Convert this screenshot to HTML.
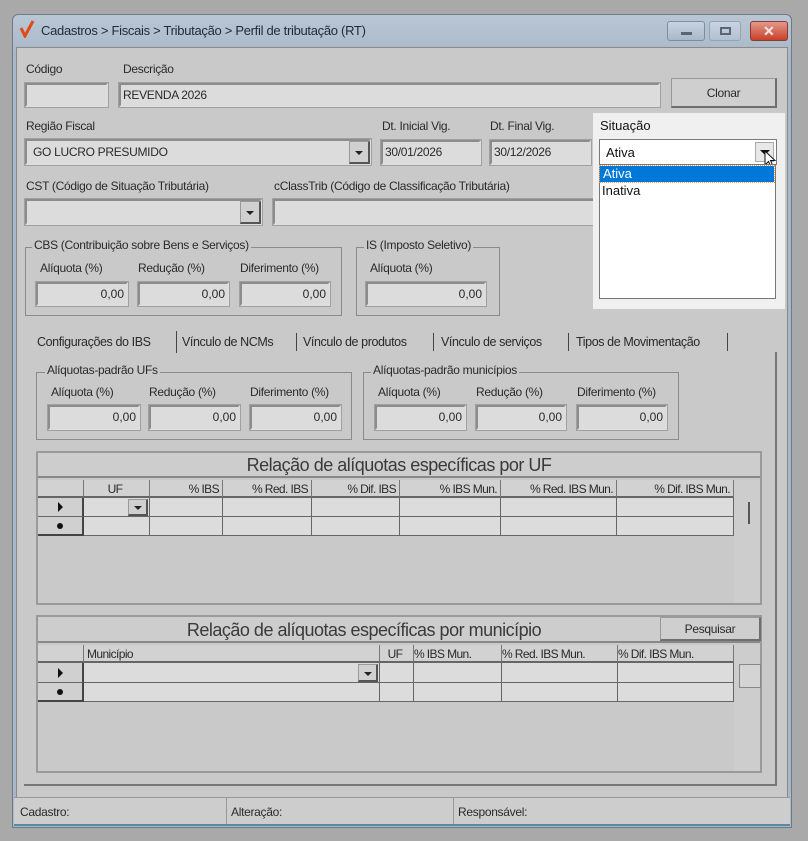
<!DOCTYPE html>
<html><head><meta charset="utf-8"><style>
*{box-sizing:border-box;margin:0;padding:0}
body{width:808px;height:841px;background:#a9a9a9;position:relative;overflow:hidden;font-family:"Liberation Sans",sans-serif;font-size:12px;color:#2a2a2a}
.a{position:absolute}
.win{left:12px;top:14px;width:780px;height:814px;background:linear-gradient(#b9c6d4,#a9b8c8 40px,#a9b8c8);border:1px solid #6f7a86;border-radius:6px 6px 0 0}
.cl{left:16px;top:47px;width:772px;height:778px;background:#c9c9c9;border:1px solid #8a8a8a}
.in{background:#dcdcdc;border:2px solid #8c8c8c;border-right-color:#ddd;border-bottom-color:#ddd;outline:1px solid #a0a0a0}
.tx{white-space:nowrap;letter-spacing:-0.3px}
.btn{background:#cfcfcf;border:1px solid #999;border-right:2px solid #6e6e6e;border-bottom:2px solid #6e6e6e;text-align:center}
.dd{background:#d0d0d0;border:1px solid #999;border-right:2px solid #555;border-bottom:2px solid #555}
.dd:after{content:"";position:absolute;left:50%;top:50%;margin:-1px 0 0 -4px;border:4px solid transparent;border-top:4px solid #222;border-bottom:0}
.grp{border:1px solid #8a8a8a}
.lg{background:#c9c9c9;padding:0 2px;white-space:nowrap;letter-spacing:-0.3px}
.v{text-align:right;padding-right:2px;line-height:20px}
.gd{background:#c9c9c9;border:2px solid #9a9a9a}
.cell{border-right:1px solid #666;border-bottom:1px solid #666;background:#dcdcdc}
.hd{border-right:1px solid #777;border-bottom:2px solid #666;background:#d2d2d2;text-align:right;padding-right:3px;line-height:18px;letter-spacing:-0.6px;white-space:nowrap}
.tab{position:absolute;top:333px;height:18px;white-space:nowrap;font-size:12.5px;letter-spacing:-0.4px;border-right:1px solid #444;line-height:18px}
</style></head><body>
<div class="a win"></div>
<svg class="a" style="left:19px;top:20px" width="16" height="18"><path d="M2 8 L6 16 L14 1" stroke="#e04a1a" stroke-width="3" fill="none"/></svg>
<div class="a tx" style="left:41px;top:23px;font-size:13px;color:#1e2a3a">Cadastros &gt; Fiscais &gt; Tributação &gt; Perfil de tributação (RT)</div>
<div class="a" style="left:667px;top:21px;width:38px;height:20px;border:1px solid #7d8ea3;border-radius:3px;background:linear-gradient(#c8d4e0,#a8b8ca)"><div class="a" style="left:13px;top:10px;width:11px;height:3px;background:#5a6678"></div></div>
<div class="a" style="left:709px;top:21px;width:32px;height:20px;border:1px solid #95a3b4;border-radius:3px;background:linear-gradient(#c8d4e0,#b2c0d0)"><div class="a" style="left:10px;top:5px;width:11px;height:8px;border:2px solid #5a6678"></div></div>
<div class="a" style="left:750px;top:21px;width:38px;height:20px;border:1px solid #8a3a30;border-radius:3px;background:linear-gradient(#e39a8a,#c8402a)"><div class="a" style="left:12px;top:1px;color:#f3e6e6;font-weight:bold;font-size:14px">✕</div></div>
<div class="a cl"></div>

<div class="a tx" style="left:26px;top:62px">Código</div>
<div class="a tx" style="left:123px;top:62px">Descrição</div>
<div class="a in" style="left:25px;top:83px;width:83px;height:24px"></div>
<div class="a in tx" style="left:119px;top:83px;width:541px;height:24px;padding:2px 2px;line-height:16px">REVENDA 2026</div>
<div class="a btn tx" style="left:671px;top:78px;width:106px;height:30px;line-height:28px">Clonar</div>

<div class="a tx" style="left:26px;top:119px">Região Fiscal</div>
<div class="a tx" style="left:382px;top:119px">Dt. Inicial Vig.</div>
<div class="a tx" style="left:490px;top:119px">Dt. Final Vig.</div>
<div class="a in tx" style="left:25px;top:139px;width:346px;height:26px;padding:3px 6px;line-height:17px">GO LUCRO PRESUMIDO</div>
<div class="a dd" style="left:349px;top:141px;width:21px;height:23px"></div>
<div class="a in tx" style="left:381px;top:140px;width:100px;height:25px;padding:2px 2px;line-height:17px">30/01/2026</div>
<div class="a in tx" style="left:490px;top:140px;width:101px;height:25px;padding:2px 2px;line-height:17px">30/12/2026</div>

<div class="a tx" style="left:26px;top:179px">CST (Código de Situação Tributária)</div>
<div class="a tx" style="left:274px;top:179px">cClassTrib (Código de Classificação Tributária)</div>
<div class="a in" style="left:25px;top:199px;width:237px;height:26px"></div>
<div class="a dd" style="left:240px;top:201px;width:21px;height:23px"></div>
<div class="a in" style="left:273px;top:199px;width:500px;height:26px"></div>

<div class="a grp" style="left:25px;top:247px;width:317px;height:69px"></div>
<div class="a lg" style="left:32px;top:238px">CBS (Contribuição sobre Bens e Serviços)</div>
<div class="a tx" style="left:40px;top:261px">Alíquota (%)</div>
<div class="a tx" style="left:138px;top:261px">Redução (%)</div>
<div class="a tx" style="left:240px;top:261px">Diferimento (%)</div>
<div class="a in v" style="left:36px;top:282px;width:92px;height:24px">0,00</div>
<div class="a in v" style="left:138px;top:282px;width:91px;height:24px">0,00</div>
<div class="a in v" style="left:240px;top:282px;width:90px;height:24px">0,00</div>
<div class="a grp" style="left:356px;top:247px;width:144px;height:69px"></div>
<div class="a lg" style="left:364px;top:238px">IS (Imposto Seletivo)</div>
<div class="a tx" style="left:370px;top:261px">Alíquota (%)</div>
<div class="a in v" style="left:366px;top:282px;width:120px;height:24px">0,00</div>

<!-- tabs -->
<div class="tab" style="left:32px;width:145px;padding-left:5px;top:331px;height:22px;line-height:22px">Configurações do IBS</div>
<div class="tab" style="left:177px;width:120px;padding-left:5px">Vínculo de NCMs</div>
<div class="tab" style="left:297px;width:137px;padding-left:6px">Vínculo de produtos</div>
<div class="tab" style="left:434px;width:135px;padding-left:7px">Vínculo de serviços</div>
<div class="tab" style="left:569px;width:159px;padding-left:7px">Tipos de Movimentação</div>
<div class="a" style="left:24px;top:352px;width:753px;height:434px;border-right:2px solid #777;border-bottom:2px solid #777"></div>

<div class="a grp" style="left:36px;top:372px;width:316px;height:68px"></div>
<div class="a lg" style="left:45px;top:363px">Alíquotas-padrão UFs</div>
<div class="a tx" style="left:51px;top:385px">Alíquota (%)</div>
<div class="a tx" style="left:149px;top:385px">Redução (%)</div>
<div class="a tx" style="left:250px;top:385px">Diferimento (%)</div>
<div class="a in v" style="left:48px;top:405px;width:92px;height:25px">0,00</div>
<div class="a in v" style="left:149px;top:405px;width:91px;height:25px">0,00</div>
<div class="a in v" style="left:250px;top:405px;width:91px;height:25px">0,00</div>
<div class="a grp" style="left:363px;top:372px;width:316px;height:68px"></div>
<div class="a lg" style="left:371px;top:363px">Alíquotas-padrão municípios</div>
<div class="a tx" style="left:378px;top:385px">Alíquota (%)</div>
<div class="a tx" style="left:476px;top:385px">Redução (%)</div>
<div class="a tx" style="left:577px;top:385px">Diferimento (%)</div>
<div class="a in v" style="left:375px;top:405px;width:91px;height:25px">0,00</div>
<div class="a in v" style="left:476px;top:405px;width:90px;height:25px">0,00</div>
<div class="a in v" style="left:577px;top:405px;width:90px;height:25px">0,00</div>

<!-- grid 1 -->
<div class="a gd" style="left:36px;top:451px;width:726px;height:154px"></div>
<div class="a" style="left:38px;top:453px;width:722px;height:25px;border-bottom:2px solid #888;background:#cdcdcd;text-align:center;font-size:18px;line-height:24px;letter-spacing:-0.5px;color:#3a3a3a">Relação de alíquotas específicas por UF</div>
<div class="a" style="left:734px;top:480px;width:26px;height:123px;background:#cdcdcd"></div>
<div class="a" style="left:748px;top:502px;width:2px;height:22px;background:#555"></div>
<div class="a" style="left:38px;top:480px">
<div class="a hd" style="left:0;top:0;width:46px;height:18px"></div>
<div class="a hd" style="left:46px;top:0;width:66px;height:18px;text-align:center">UF</div>
<div class="a hd" style="left:112px;top:0;width:73px;height:18px">% IBS</div>
<div class="a hd" style="left:185px;top:0;width:89px;height:18px">% Red. IBS</div>
<div class="a hd" style="left:274px;top:0;width:88px;height:18px">% Dif. IBS</div>
<div class="a hd" style="left:362px;top:0;width:101px;height:18px">% IBS Mun.</div>
<div class="a hd" style="left:463px;top:0;width:116px;height:18px">% Red. IBS Mun.</div>
<div class="a hd" style="left:579px;top:0;width:117px;height:18px">% Dif. IBS Mun.</div>
<div class="a cell" style="left:0;top:18px;width:46px;height:19px;border-right:2px solid #444;background:#d0d0d0"></div>
<div class="a cell" style="left:0;top:37px;width:46px;height:19px;border-right:2px solid #444;border-bottom:2px solid #444;background:#d0d0d0"></div>
<div class="a" style="left:20px;top:22px;border:5px solid transparent;border-left:5px solid #111;border-right:0"></div>
<div class="a" style="left:19px;top:43px;width:6px;height:6px;border-radius:3px;background:#111"></div>
<div class="a cell" style="left:46px;top:18px;width:66px;height:19px"></div><div class="a dd" style="left:90px;top:19px;width:20px;height:17px"></div>
<div class="a cell" style="left:112px;top:18px;width:73px;height:19px"></div><div class="a cell" style="left:185px;top:18px;width:89px;height:19px"></div><div class="a cell" style="left:274px;top:18px;width:88px;height:19px"></div><div class="a cell" style="left:362px;top:18px;width:101px;height:19px"></div><div class="a cell" style="left:463px;top:18px;width:116px;height:19px"></div><div class="a cell" style="left:579px;top:18px;width:117px;height:19px"></div>
<div class="a cell" style="left:46px;top:37px;width:66px;height:19px"></div><div class="a cell" style="left:112px;top:37px;width:73px;height:19px"></div><div class="a cell" style="left:185px;top:37px;width:89px;height:19px"></div><div class="a cell" style="left:274px;top:37px;width:88px;height:19px"></div><div class="a cell" style="left:362px;top:37px;width:101px;height:19px"></div><div class="a cell" style="left:463px;top:37px;width:116px;height:19px"></div><div class="a cell" style="left:579px;top:37px;width:117px;height:19px"></div>
</div>

<!-- grid 2 -->
<div class="a gd" style="left:36px;top:615px;width:726px;height:158px"></div>
<div class="a" style="left:38px;top:617px;width:722px;height:26px;border-bottom:2px solid #888;background:#cdcdcd;text-align:center;font-size:18px;line-height:26px;letter-spacing:-0.5px;padding-right:70px;color:#3a3a3a">Relação de alíquotas específicas por município</div>
<div class="a btn tx" style="left:660px;top:617px;width:101px;height:24px;line-height:22px">Pesquisar</div>
<div class="a" style="left:734px;top:645px;width:26px;height:126px;background:#cdcdcd"></div>
<div class="a" style="left:739px;top:664px;width:22px;height:24px;border:1px solid #888;background:#d4d4d4"></div>
<div class="a" style="left:38px;top:645px">
<div class="a hd" style="left:0;top:0;width:46px;height:18px"></div>
<div class="a hd" style="left:46px;top:0;width:296px;height:18px;text-align:left;padding-left:3px">Município</div>
<div class="a hd" style="left:342px;top:0;width:34px;height:18px;text-align:center">UF</div>
<div class="a hd" style="left:376px;top:0;width:88px;height:18px;text-align:left">% IBS Mun.</div>
<div class="a hd" style="left:464px;top:0;width:116px;height:18px;text-align:left">% Red. IBS Mun.</div>
<div class="a hd" style="left:580px;top:0;width:116px;height:18px;text-align:left">% Dif. IBS Mun.</div>
<div class="a cell" style="left:0;top:18px;width:46px;height:20px;border-right:2px solid #444;background:#d0d0d0"></div>
<div class="a cell" style="left:0;top:38px;width:46px;height:19px;border-right:2px solid #444;border-bottom:2px solid #444;background:#d0d0d0"></div>
<div class="a" style="left:20px;top:23px;border:5px solid transparent;border-left:5px solid #111;border-right:0"></div>
<div class="a" style="left:19px;top:44px;width:6px;height:6px;border-radius:3px;background:#111"></div>
<div class="a cell" style="left:46px;top:18px;width:296px;height:20px"></div><div class="a dd" style="left:320px;top:19px;width:20px;height:18px"></div>
<div class="a cell" style="left:342px;top:18px;width:34px;height:20px"></div><div class="a cell" style="left:376px;top:18px;width:88px;height:20px"></div><div class="a cell" style="left:464px;top:18px;width:116px;height:20px"></div><div class="a cell" style="left:580px;top:18px;width:116px;height:20px"></div>
<div class="a cell" style="left:46px;top:38px;width:296px;height:19px"></div><div class="a cell" style="left:342px;top:38px;width:34px;height:19px"></div><div class="a cell" style="left:376px;top:38px;width:88px;height:19px"></div><div class="a cell" style="left:464px;top:38px;width:116px;height:19px"></div><div class="a cell" style="left:580px;top:38px;width:116px;height:19px"></div>
</div>

<!-- status bar -->
<div class="a" style="left:14px;top:797px;width:776px;height:29px;background:#cdcdcd;border-top:1px solid #999;border-bottom:2px solid #5a8aa0"></div>
<div class="a tx" style="left:20px;top:805px">Cadastro:</div>
<div class="a" style="left:226px;top:798px;width:1px;height:26px;background:#999"></div>
<div class="a tx" style="left:231px;top:805px">Alteração:</div>
<div class="a" style="left:453px;top:798px;width:1px;height:26px;background:#999"></div>
<div class="a tx" style="left:458px;top:805px">Responsável:</div>

<!-- Situação (sharp) -->
<div class="a" style="left:593px;top:113px;width:192px;height:196px;background:#f0f0f0"></div>
<div class="a" style="left:600px;top:118px;font-size:13px;color:#111">Situação</div>
<div class="a" style="left:599px;top:139px;width:178px;height:26px;background:#fff;border:1px solid #7a7a7a"></div>
<div class="a" style="left:606px;top:145px;font-size:13px;color:#111">Ativa</div>
<div class="a" style="left:755px;top:142px;width:19px;height:20px;background:#e8e8e8;border:1px solid #aaa"></div>
<div class="a" style="left:760px;top:150px;border:5px solid transparent;border-top:5px solid #111;border-bottom:0"></div>
<svg class="a" style="left:764px;top:150px" width="14" height="20"><path d="M1 1 L1 15 L4.5 11.5 L7 17 L9 16 L6.5 10.5 L11 10.5 Z" fill="#fff" stroke="#111" stroke-width="1"/></svg>
<div class="a" style="left:599px;top:164px;width:177px;height:135px;background:#fff;border:1px solid #777"></div>
<div class="a" style="left:600px;top:166px;width:174px;height:16px;background:#0078d7;outline:1px dotted #e0a060"></div>
<div class="a" style="left:603px;top:166px;font-size:13px;color:#fff;line-height:16px">Ativa</div>
<div class="a" style="left:602px;top:183px;font-size:13px;color:#111;line-height:16px">Inativa</div>
</body></html>
